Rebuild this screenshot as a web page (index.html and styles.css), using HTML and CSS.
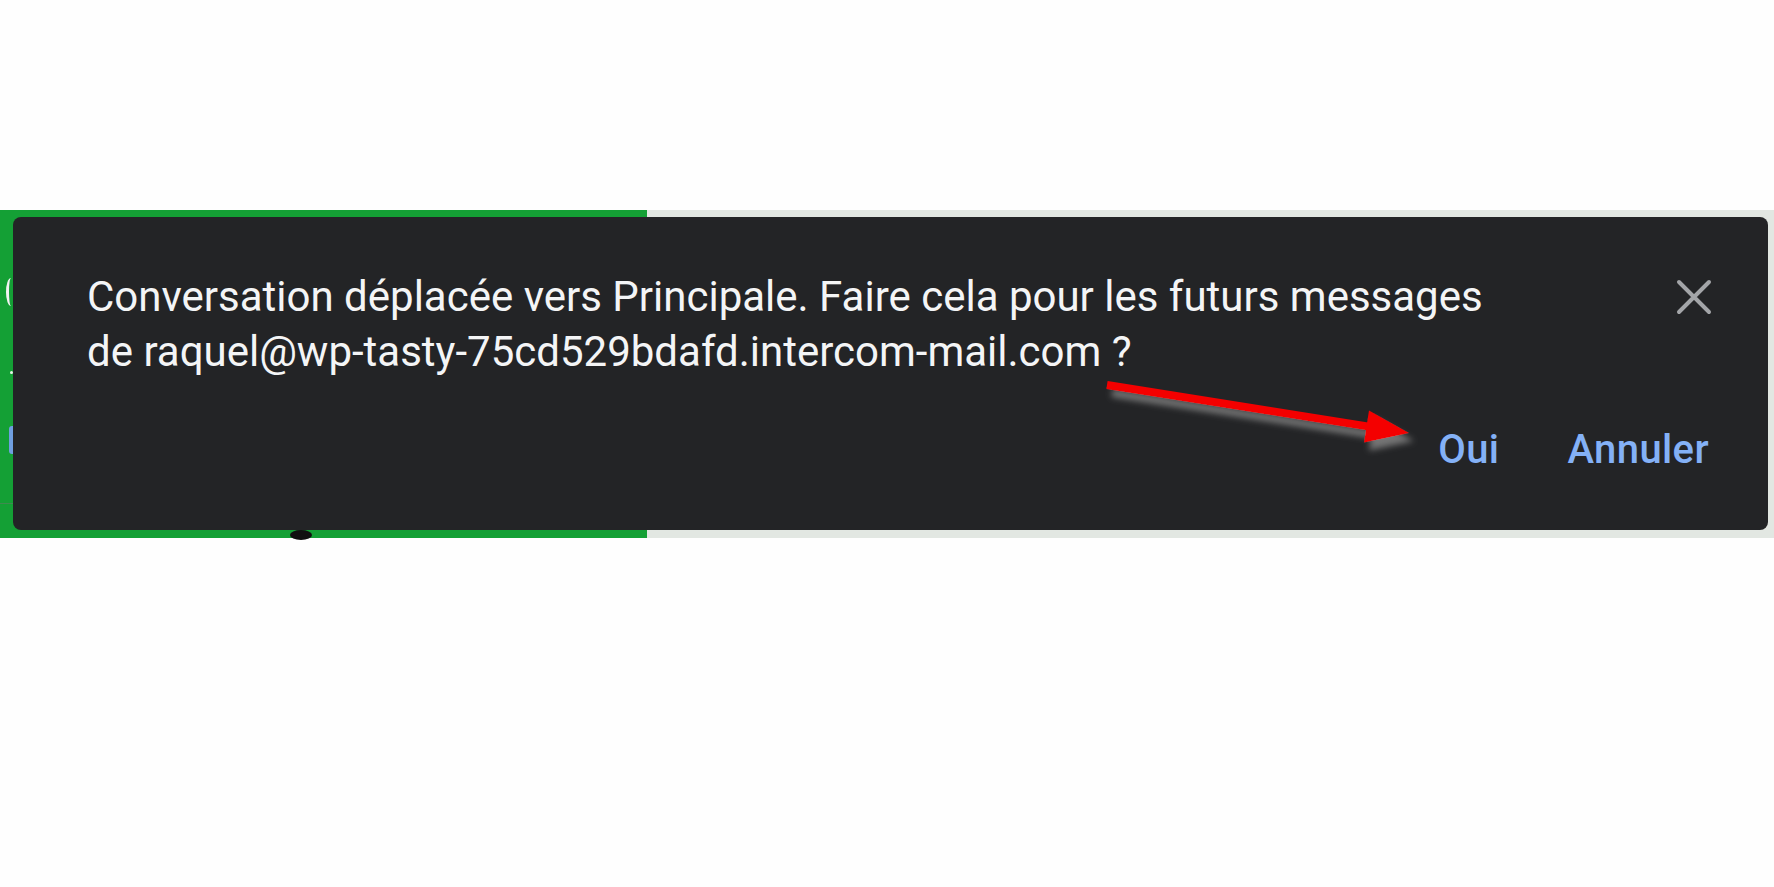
FILE: index.html
```html
<!DOCTYPE html>
<html lang="fr">
<head>
<meta charset="utf-8">
<title>Conversation déplacée</title>
<link rel="stylesheet" href="styles.css">
</head>
<body>
<div class="stage">
  <div class="backdrop">
    <span class="peek peek-arc"></span>
    <span class="peek peek-dot"></span>
    <span class="peek peek-blue"></span>
    <span class="peek peek-rule"></span>
    <span class="peek peek-bump"></span>

    <div class="snackbar" role="alert">
      <div class="snackbar-main">
        <p class="message">Conversation déplacée vers Principale. Faire cela pour les futurs messages<br>de raquel@wp-tasty-75cd529bdafd.intercom-mail.com ?</p>
        <button class="close" aria-label="Fermer">
          <svg width="36" height="36" viewBox="0 0 36 36" aria-hidden="true">
            <path d="M3 3 L33 33 M33 3 L3 33" stroke="#a3a5a8" stroke-width="4" stroke-linecap="round" fill="none"/>
          </svg>
        </button>
      </div>
      <div class="actions">
        <button class="action">Oui</button>
        <button class="action">Annuler</button>
      </div>
    </div>
  </div>

  <!-- red pointer arrow drawn over the snackbar -->
  <svg class="annotation" width="1774" height="887" viewBox="0 0 1774 887" aria-hidden="true">
    <defs>
      <filter id="shade" x="-10%" y="-60%" width="130%" height="280%">
        <feDropShadow dx="5" dy="8" stdDeviation="3" flood-color="#7d7d7d" flood-opacity="0.9"/>
      </filter>
    </defs>
    <g filter="url(#shade)">
      <line x1="1107" y1="385" x2="1369" y2="426.6" stroke="#f40000" stroke-width="8"/>
      <polygon points="1409,433 1369,410.4 1364,442.6" fill="#f40000"/>
    </g>
  </svg>
</div>
</body>
</html>
```

FILE: styles.css
```css
* {
  box-sizing: border-box;
}

html,
body {
  margin: 0;
  background: #fefefe;
}

.stage {
  position: relative;
  width: 1774px;
  height: 887px;
  padding-top: 210px;
  overflow: hidden;
}

/* strip of the page behind the snackbar: green panel on the left, grey on the right */
.backdrop {
  position: relative;
  display: flex;
  height: 328px;
  padding: 7px 6px 8px 13px;
  background: linear-gradient(to right, #14a035 0, #14a035 647px, #e2e7e2 647px, #e2e7e2 100%);
}

.peek {
  position: absolute;
  display: block;
}

.peek-arc {
  left: 6px;
  top: 68px;
  width: 10px;
  height: 28px;
  border-radius: 50%;
  border-left: 3px solid #f4f4f4;
}

.peek-dot {
  left: 10px;
  top: 161px;
  width: 3px;
  height: 3px;
  border-radius: 50%;
  background: #e8f4e8;
}

.peek-blue {
  left: 9px;
  top: 216px;
  width: 5px;
  height: 28px;
  border-radius: 3px 0 0 3px;
  background: #6f9fe0;
}

.peek-rule {
  left: 0;
  top: 293px;
  width: 13px;
  height: 1px;
  background: #3f8a4f;
}

.peek-bump {
  left: 290px;
  top: 320px;
  width: 22px;
  height: 10px;
  border-radius: 50%;
  background: #101010;
}

.snackbar {
  position: relative;
  flex: 1;
  display: flex;
  flex-direction: column;
  padding: 52px 56px 0 74px;
  background: #232426;
  border-radius: 8px;
  font-family: Roboto, "Liberation Sans", Arial, sans-serif;
}

.snackbar-main {
  display: flex;
  justify-content: space-between;
  align-items: flex-start;
}

.message {
  margin: 0;
  color: #f4f5f6;
  font-size: 42px;
  line-height: 55px;
  font-weight: 400;
}

.close {
  margin-top: 10px;
  padding: 0;
  border: 0;
  background: none;
  width: 36px;
  height: 36px;
  line-height: 0;
}

.actions {
  display: flex;
  justify-content: flex-end;
  gap: 68px;
  margin-top: 47px;
  margin-right: 3px;
}

.action {
  padding: 0;
  border: 0;
  background: none;
  color: #84b1f6;
  font-family: Roboto, "Liberation Sans", Arial, sans-serif;
  font-size: 40px;
  line-height: 48px;
  font-weight: 500;
  letter-spacing: 0.4px;
}

.annotation {
  position: absolute;
  left: 0;
  top: 0;
  pointer-events: none;
}
```
